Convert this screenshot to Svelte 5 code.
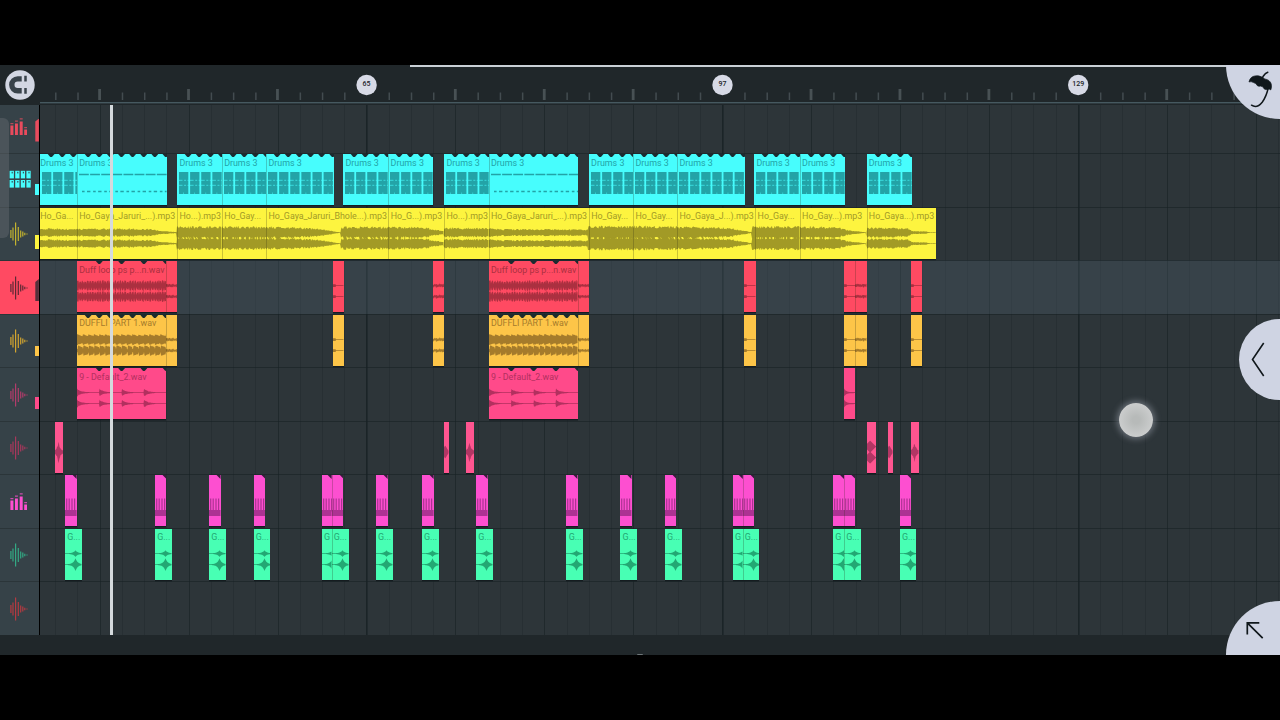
<script>
  const LEFT = 40;
  const STEP = 22.232;
  const FIRST = 99.7 - STEP * 2;

  const ticks = Array.from({ length: 56 }, (_, i) => ({
    x: FIRST + i * STEP - LEFT,
    major: (i - 2) % 4 === 0,
    section: (i - 14) % 16 === 0
  })).filter((t) => t.x < 1240);

  const markers = [
    { label: '65', x: 366.6 },
    { label: '97', x: 722.5 },
    { label: '129', x: 1078.2 }
  ];

  const noise = (n) => {
    const v = Math.sin(n * 127.1 + 11.7) * 43758.5453;
    return v - Math.floor(v);
  };

  // amplitude keypoints of the song, as [x, half height]
  const songKeys = [
    [40, 4.2], [77, 3.8], [130, 4], [152, 3.5], [160, 1.8], [176.5, 0.6], [177, 6], [266, 6], [300, 5.2],
    [322, 3.4], [338, 0.8], [341, 0.4], [341.5, 5.8], [390, 5.6], [425, 5.4], [436, 2.8], [444, 1.8], [444.5, 4.8], [488, 4.4],
    [500, 3.4], [540, 3.5], [587, 3], [588, 6.4], [640, 6.4], [677, 6.2], [710, 5.5], [732, 4.4], [742, 2.4], [751, 0.6],
    [752, 0.6], [752.6, 6.2], [800, 6.2], [838, 5.2], [848, 2.4], [856, 1.5], [866, 0.3], [866.7, 5], [908, 4.4],
    [912, 1.6], [926, 1.2], [930, 0.3], [937, 0.3]
  ];
  function songAmp(x) {
    for (let i = 1; i < songKeys.length; i++) {
      if (x <= songKeys[i][0]) {
        const [x0, a0] = songKeys[i - 1];
        const [x1, a1] = songKeys[i];
        return a0 + ((a1 - a0) * (x - x0)) / (x1 - x0);
      }
    }
    return 0.3;
  }

  const amps = {
    song: (x) => songAmp(x) * (0.68 + 0.4 * noise(Math.floor(x))),
    loop: (x, d) => (Math.floor(d * 2) % 5 < 4 ? 5.4 : 2) * (0.65 + 0.35 * noise(Math.floor(x) * 3)),
    duffli: (x, d, c) => (c > 30 && d % 5.55 < 0.6 ? 1.6 : 5.8 - 2 * ((d % 5.55) / 5.55)) * (0.85 + 0.15 * noise(x)),
    hit: (x, d) => 0.3 + 4 * Math.exp(-(d % 22.3) / 4) * (0.7 + 0.3 * noise(x)),
    tail: (x) => 0.5 + 1.6 * noise(x),
    thin: (x, d) => (d < 3 ? 1.3 : 0.35),
    flare: (x, d) => 0.5 + 3.5 * Math.exp(-d / 2),
    swell: (x, d, c) => 0.3 + (c > 30 ? 6 : 3) * Math.exp(-Math.abs(d - 10.5) / 2.2),
    bumps: (x, d) => Math.max(0.4, 6 - Math.abs(d - 3.2) * 1),
    sweep: (x, d) => Math.max(0.4, 6.5 - Math.abs(d - 1.2) * 1.6),
    spike: (x, d) => 1 + 11 * Math.exp(-Math.abs(d - 3.5) / 1.6) * (0.6 + 0.4 * noise(x))
  };

  function wave(kind, x, w, center) {
    const f = amps[kind];
    const top = [];
    const bottom = [];
    for (let d = 0; d <= w; d += 0.5) {
      top.push(`${d},${(center - f(x + d, d, center)).toFixed(2)}`);
      bottom.unshift(`${d},${(center + f(x + d + 0.37, d, center)).toFixed(2)}`);
    }
    return `M${top.join('L')}L${bottom.join('L')}Z`;
  }

  const clip = (x, end, kind, label = '', notch = 0) => ({ x, end, w: end - x, kind, label, notch });
  const drums = (x, end, kind = 'beats') => clip(x, end, kind, 'Drums 3', 11.12);
  const hits = (wide) => [
    clip(333.5, 344.3, 'thin'), clip(433.2, 444.3, 'tail'), ...wide,
    clip(744.5, 756, 'thin'), clip(844.5, 855.5, 'thin'), clip(855.5, 867, 'tail'), clip(911.2, 922.4, 'thin')
  ];
  const starts = [[65, 76.6], [155, 166.5], [209.2, 220.7], [253.6, 265.1], [322, 331.6], [331.6, 343.4], [376, 387.6], [422, 433.6],
    [476.2, 487.7], [566.6, 578], [620.6, 632], [665, 676.6], [733, 742.8], [742.8, 754.4], [833.2, 844.2], [844.2, 855.6], [900, 911.4]];
  const cut = [4, 12, 14];

  const tracks = [
    { icon: 'bars', color: '#e94b5d', meter: [18, 23], clips: [] },
    {
      icon: 'pads', color: '#47fdfd', ink: '#23a3a7', meter: [30, 11],
      clips: [
        drums(40, 77), drums(77, 166.6, 'dashes'), drums(177.3, 222), drums(222, 266.3), drums(266.3, 334),
        drums(343.3, 388.5), drums(388.5, 433.5), drums(444.3, 488.8), drums(488.8, 578, 'dashes'),
        drums(589, 633.4), drums(633.4, 677.4), drums(677.4, 745), drums(754.3, 800), drums(800, 845), drums(866.7, 911.8)
      ]
    },
    {
      icon: 'wave', color: '#fdf43f', ink: '#a29a26', dim: '#c3b32f', meter: [27, 14],
      clips: [
        clip(40, 77, 'song', 'Ho_Ga...'), clip(77, 177.3, 'song', 'Ho_Gaya_Jaruri_...).mp3'),
        clip(177.3, 222, 'song', 'Ho...).mp3'), clip(222, 266.3, 'song', 'Ho_Gay...'),
        clip(266.3, 388.5, 'song', 'Ho_Gaya_Jaruri_Bhole...).mp3'), clip(388.5, 444.3, 'song', 'Ho_G...).mp3'),
        clip(444.3, 488.8, 'song', 'Ho...).mp3'), clip(488.8, 589, 'song', 'Ho_Gaya_Jaruri_...).mp3'),
        clip(589, 633.4, 'song', 'Ho_Gay...'), clip(633.4, 677.4, 'song', 'Ho_Gay...'),
        clip(677.4, 755.5, 'song', 'Ho_Gaya_J...).mp3'), clip(755.5, 800, 'song', 'Ho_Gay...'),
        clip(800, 866.7, 'song', 'Ho_Gay...).mp3'), clip(866.7, 936.4, 'song', 'Ho_Gaya...).mp3')
      ]
    },
    {
      icon: 'wave', color: '#ff4a62', ink: '#ab3040', active: true, meter: [18, 22],
      clips: [clip(77, 166.2, 'loop', 'Duff loop ps p...n.wav', 22.3), clip(166.2, 177.4, 'tail'),
        ...hits([clip(488.8, 577.6, 'loop', 'Duff loop ps p...n.wav', 22.3), clip(577.6, 589.2, 'tail')])]
    },
    {
      icon: 'wave', color: '#fdc548', ink: '#a57b2b', dim: '#d3a52f', meter: [31, 10],
      clips: [clip(77, 166.2, 'duffli', 'DUFFLI PART 1.wav', 11.12), clip(166.2, 177.4, 'tail'),
        ...hits([clip(488.8, 577.6, 'duffli', 'DUFFLI PART 1.wav', 11.12), clip(577.6, 589.2, 'tail')])]
    },
    {
      icon: 'wave', color: '#ff4a8a', ink: '#b2305f', dim: '#b23c6b', meter: [29, 12],
      clips: [clip(77, 166.4, 'hit', '9 - Default_2.wav', 22.3), clip(488.8, 578, 'hit', '9 - Default_2.wav', 22.3),
        clip(844.5, 855.5, 'flare')]
    },
    {
      icon: 'wave', color: '#ff5590', ink: '#b23664', dim: '#a8385c',
      clips: [clip(55, 63, 'spike'), clip(444.2, 448.7, 'sweep'), clip(466.2, 474.5, 'spike'),
        clip(866.6, 875.6, 'bumps'), clip(888.5, 893, 'sweep'), clip(911.2, 919, 'spike')]
    },
    {
      icon: 'bars', color: '#fd4fd0', ink: '#ad3293', dim: '#dc2fbd',
      clips: starts.map(([a, b]) => clip(a, b, 'notes'))
    },
    {
      icon: 'wave', color: '#48ffb4', ink: '#23a873', dim: '#33a984',
      clips: starts.map(([a, b], i) => clip(a, cut.includes(i) ? b : b + 5.2, 'swell', cut.includes(i) ? 'G' : 'G...'))
    },
    { icon: 'wave', color: '#d23a42', dim: '#b53a41', clips: [] }
  ];

  const gap = (clips, i) => clips[i].x - (i ? clips[i - 1].end : LEFT);
  const repeat = (w, step, from = 0) => {
    const out = [];
    for (let x = from; x < w - 1; x += step) out.push(x);
    return out;
  };
  const joined = (clips, i) => i > 0 && gap(clips, i) < 0.1;
</script>

<div class="screen">
  <header class="ruler">
    <div class="snap">
      <svg width="30" height="30" viewBox="0 0 30 30">
        <circle cx="15" cy="15" r="14.7" fill="#d2d6e2" />
        <path d="M16.7 8.9h-4a5.9 5.9 0 0 0 0 11.8h4" fill="none" stroke="#38424a" stroke-width="5.4" />
        <path d="M20.5 5.7v5.7M20.5 18v5.7" stroke="#38424a" stroke-width="2.5" />
      </svg>
    </div>
    <svg class="scale" width="1240" height="40">
      {#each ticks as t}
        {#if !t.section}
          <rect x={t.x - (t.major ? 1.5 : 0.2)} y={t.major ? 24 : 27.5} width={t.major ? 2.8 : 1.5} height={t.major ? 11 : 7.5} fill={t.major ? '#485154' : '#434c50'} />
        {/if}
      {/each}
      <rect x="0" y="37" width="1240" height="1.4" fill="#465960" />
      {#each markers as m}
        <circle cx={m.x - LEFT} cy="20" r="10.2" fill="#d7dae6" />
        <text x={m.x - LEFT} y="21.4" text-anchor="middle">{m.label}</text>
      {/each}
    </svg>
  </header>

  <main>
    <aside>
      {#each tracks as t}
        <div class="head" class:active={t.active} style:color={t.active ? '#5c2935' : (t.dim && t.icon === 'wave' ? t.dim : t.color)}>
          <svg class="icon" width="20" height="24" viewBox="0 0 20 24">
            {#if t.icon === 'bars'}
              <g fill="currentColor">
                <path d="M1.4 10.5h3V20h-3zM6 8.500h2.900V20H6zM10.700 6.500h3V20h-3zM15.200 14.500h2.800V20h-2.800z" />
                <path d="M1.400 8h3v1.200h-3zM6 5.500h2.900v1.200H6zM10.700 3.300h3v1.200h-3zM15.200 12h2.800v1.200h-2.800z" opacity=".75" />
              </g>
            {:else if t.icon === 'pads'}
              {#each [0, 1, 2, 3] as c}
                {#each [1.8, 11] as y}
                  <rect x={c * 5.6 + 0.6} {y} width="4.3" height="7.6" fill={t.color} />
                  <rect x={c * 5.6 + 2.6} y={y + 1} width="1.2" height="1.6" fill="#34555c" />
                {/each}
              {/each}
            {:else}
              <path d="M1.900 8v8M4 5.500v13M6.600 .5v23M9.300 5v14M11.700 8.500v7M13.800 9.500v5M15.800 10.700v2.600M18 11.500v1" stroke="currentColor" stroke-width="1.200" />
            {/if}
          </svg>
          {#if t.meter}
            <i class="meter" class:slanted={t.icon === 'bars' || t.active} style:top="{t.meter[0]}px" style:height="{t.meter[1]}px" style:background={t.active ? '#54313c' : t.color}></i>
          {/if}
        </div>
      {/each}
      <div class="scroll"></div>
    </aside>

    <section class="timeline">
      <svg class="grid" width="1240" height="530">
        {#each ticks as t}
          <rect x={Math.round(t.x)} y="0" width={t.section ? 1.6 : 1} height="530" fill="#161f22" opacity={t.section ? 0.75 : t.major ? 0.55 : 0.24} />
        {/each}
      </svg>
      {#each tracks as t}
        <div class="lane" class:active={t.active}>
          {#each t.clips as c, i}
            <div class="clip" class:joined={joined(t.clips, i)} style:margin-left="{gap(t.clips, i)}px" style:width="{c.w}px" style:background={t.color} style:color={t.ink}>
              <svg width={c.w} height="51">
                {#if c.kind === 'beats'}
                  {#each repeat(c.w, 11.12, 2) as x}
                    <rect {x} y="18" width="9.3" height="22" fill={t.ink} />
                    <path d="M{x - 1.5} 26.3h5m1.6 0h2m1.4 0h1.5M{x - 1.5} 31.3h5m1.6 0h2m1.4 0h1.5" stroke={t.color} stroke-width=".8" opacity=".8" />
                    <path d="M{x + 4.5} 38.5v1.5" stroke={t.color} stroke-width=".8" opacity=".6" />
                  {/each}
                {:else if c.kind === 'dashes'}
                  <path d="M2 20.5H{c.w}" stroke={t.ink} stroke-width="1.3" stroke-dasharray="9.8 1.32" />
                  <path d="M5 37.5H{c.w}" stroke={t.ink} stroke-width="1.4" stroke-dasharray="2.6 2.4 3.4 2.72" />
                {:else if c.kind === 'notes'}
                  <path d="M1.7 23.5v13M4.2 23.5v13M7 23.5v13M9.6 23.5v13" stroke={t.ink} stroke-width="1.2" />
                  <rect x="0" y="35" width={c.w} height="6" fill={t.ink} />
                  <path d="M{c.w - 4} 0h4v4z" fill="#3a1b3c" />
                {:else if c.kind === 'spike' || c.kind === 'sweep'}
                  <path d={wave(c.kind, c.x, c.w, 30)} fill={t.ink} />
                {:else}
                  <path d={wave(c.kind, c.x, c.w, 24.6)} fill={t.ink} />
                  <path d={wave(c.kind, c.x, c.w, 35.6)} fill={t.ink} />
                {/if}
                {#if c.notch}
                  {#each repeat(c.w + 2, c.notch, c.notch) as x}
                    <path d="M{x - 3.6} -.2h7.2l-2.3 2.7q-1.3 1.1-2.6 0z" fill="#1b2b30" />
                  {/each}
                {/if}
              </svg>
              {#if c.label}<span class:first={c.x === LEFT}>{c.label}</span>{/if}
            </div>
          {/each}
        </div>
      {/each}
      <div class="playhead"></div>
    </section>
  </main>

  <footer><i></i></footer>

  <div class="progress"></div>
  <div class="touch"></div>
  <button class="corner top" aria-label="Pan">
    <svg width="54" height="54" viewBox="1226 65 54 54">
      <path d="M1249 81.9q1.2-5.4 6.2-6 3.2-.7 6.1.9 1.9.2 3.2 2.1 5.600.9 6.700 5.100.7 2.900-.4 5.900-1.700-1.600-3.300-.6-2.300.7-3.400-.5-.8-2.600-3.500-2.700-2.300.5-3.400-.6-.9-2.300-3.600-2.900-2.500-1.500-4.600-.7z" fill="#10171b" stroke="#10171b" stroke-width=".7" stroke-linejoin="round" />
      <path d="M1262 78.500l1.400-2.500q1.800-3 4.400-3.800M1268.200 88q-1.800 8.500-6 14.200-5.400 6.700-10.700 3" fill="none" stroke="#10171b" stroke-width="1.500" stroke-linecap="round" />
    </svg>
  </button>
  <button class="side" aria-label="Open panel">
    <svg width="41" height="81" viewBox="1239 319 41 81"><path d="M1263.700 343l-11.200 16.500 11.200 16.500" fill="none" stroke="#10171b" stroke-width="1.600" /></svg>
  </button>
  <button class="corner bottom" aria-label="Select">
    <svg width="54" height="54" viewBox="1226 601 54 54"><path d="M1247.300 634.500v-11.700h12M1247.300 622.800l15.400 15.400" fill="none" stroke="#10171b" stroke-width="1.700" /></svg>
  </button>
</div>

<style>
  :global(body) {
    margin: 0;
    background: #000;
  }
  .screen {
    position: relative;
    box-sizing: border-box;
    width: 1280px;
    height: 720px;
    padding: 65px 0;
    display: flex;
    flex-direction: column;
    overflow: hidden;
    background: #000;
    font-family: Roboto, sans-serif;
  }
  .ruler {
    display: flex;
    height: 40px;
    background: #20272a;
  }
  .snap {
    width: 40px;
    padding: 4.5px 0 0 5px;
    box-sizing: border-box;
  }
  .scale text {
    font: 500 7px Roboto, sans-serif;
    fill: #1b2226;
  }
  main {
    display: flex;
    height: 530px;
  }
  aside {
    position: relative;
    width: 39.4px;
    height: 530px;
    margin-right: 0.6px;
    overflow: hidden;
    background: #364248;
  }
  .head {
    position: relative;
    box-sizing: border-box;
    height: 53.5px;
    display: flex;
    align-items: center;
    padding: 1px 0 0 9px;
    border-top: 1px solid #2b3539;
  }
  .head:first-child,
  .lane:first-of-type {
    margin-top: -5.45px;
  }
  .head.active {
    background: #ff4a62;
  }
  .icon {
    overflow: visible;
  }
  .meter {
    position: absolute;
    right: 0.5px;
    width: 3.6px;
  }
  .meter.slanted {
    clip-path: polygon(0 3px, 100% 0, 100% 100%, 0 100%);
  }
  .scroll {
    position: absolute;
    left: 0;
    top: 13px;
    width: 9px;
    height: 120px;
    border-radius: 0 6px 6px 0;
    background: rgba(120, 125, 130, 0.32);
  }
  .timeline {
    position: relative;
    width: 1240px;
    height: 530px;
    overflow: hidden;
    background: #2d3539;
  }
  .grid {
    position: absolute;
    inset: 0;
  }
  .lane {
    box-sizing: border-box;
    position: relative;
    display: flex;
    height: 53.5px;
    border-top: 1px solid rgba(24, 33, 36, 0.6);
  }
  .lane.active {
    background: rgba(75, 95, 105, 0.33);
  }
  .clip {
    position: relative;
    flex: none;
    height: 51px;
    overflow: hidden;
    box-shadow: 0 1.5px 0 #151c20;
  }
  .clip.joined::before {
    content: '';
    position: absolute;
    z-index: 1;
    inset: 0 auto 0 0;
    width: 1px;
    background: rgba(40, 40, 20, 0.24);
  }
  .clip svg {
    display: block;
  }
  .clip span {
    position: absolute;
    left: 2.2px;
    top: 2.8px;
    font-size: 8.9px;
    line-height: 12px;
    white-space: nowrap;
  }
  .clip span.first {
    left: 0.2px;
  }
  .playhead {
    position: absolute;
    left: 69.6px;
    top: 0;
    width: 3.4px;
    height: 530px;
    background: #d5dadd;
  }
  footer {
    display: flex;
    align-items: flex-end;
    justify-content: center;
    height: 20px;
    background: #20272a;
  }
  footer i {
    width: 6px;
    height: 1px;
    border-radius: 3px 3px 0 0;
    background: #6d7679;
  }
  .progress {
    position: absolute;
    left: 410px;
    top: 65px;
    right: 0;
    height: 2px;
    background: #c9d0d6;
  }
  .touch {
    position: absolute;
    left: 1119px;
    top: 403px;
    width: 34px;
    height: 34px;
    border-radius: 50%;
    background: radial-gradient(circle, #b7bab9 0 15%, #c9cbcb 65%, #d0d2d4 100%);
    box-shadow: 0 0 6px 2px rgba(190, 195, 210, 0.42);
  }
  button {
    position: absolute;
    right: 0;
    padding: 0;
    border: 0;
    background: #cfd4e3;
  }
  button svg {
    display: block;
  }
  .corner {
    width: 54px;
    height: 54px;
  }
  .top {
    top: 65px;
    border-bottom-left-radius: 54px;
  }
  .bottom {
    top: 601px;
    border-top-left-radius: 54px;
  }
  .side {
    top: 319px;
    width: 41px;
    height: 81px;
    border-radius: 41px 0 0 41px;
  }
</style>
